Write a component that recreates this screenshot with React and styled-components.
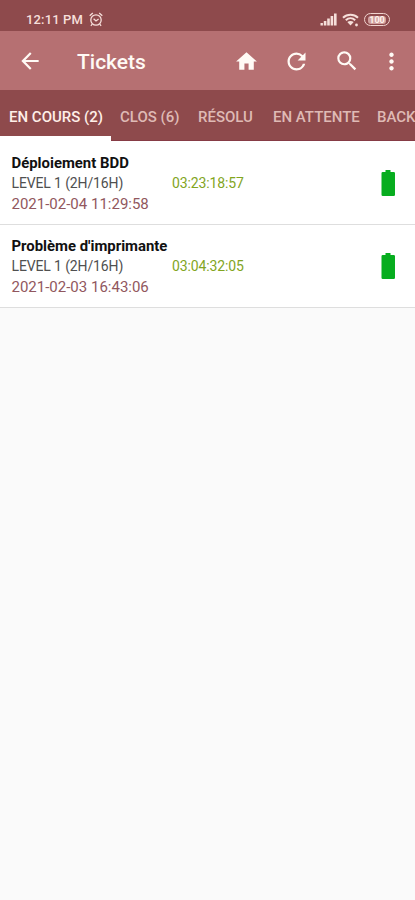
import React from "react";
import styled, { createGlobalStyle } from "styled-components";
import { MdArrowBack, MdHome, MdRefresh, MdSearch, MdMoreVert } from "react-icons/md";

const GlobalStyle = createGlobalStyle`
  * { box-sizing: border-box; }
  body { margin: 0; background: #fafafa; font-family: Roboto, sans-serif; }
`;

const Screen = styled.div`
  width: 415px;
  height: 900px;
  overflow: hidden;
  background: #fafafa;
`;

const StatusBar = styled.header`
  display: flex;
  align-items: center;
  justify-content: space-between;
  height: 31px;
  padding: 8px 25px 0 26px;
  background: #8e4a4c;
  color: #f6dfda;
`;

const StatusGroup = styled.div`
  display: flex;
  align-items: center;
  gap: ${(p) => p.$gap}px;
`;

const Clock = styled.span`
  font-size: 13px;
  line-height: 16px;
  font-weight: 500;
  letter-spacing: 0.15px;
`;

const Toolbar = styled.nav`
  display: flex;
  align-items: center;
  height: 59px;
  padding: 1px 4px 0 17px;
  background: #b67072;
  color: #fffaf5;
`;

const IconButton = styled.button`
  display: flex;
  align-items: center;
  justify-content: center;
  flex: none;
  width: ${(p) => p.$width}px;
  height: 40px;
  padding: 0;
  border: 0;
  background: none;
  color: inherit;
`;

const Title = styled.h1`
  flex: 1;
  margin: 2px 0 0 34px;
  font-size: 21px;
  line-height: 28px;
  font-weight: 500;
  letter-spacing: 0;
`;

const Tabs = styled.div`
  display: flex;
  width: 415px;
  height: 51px;
  overflow: hidden;
  background: linear-gradient(#8e4a4c 50px, #863b45 50px);
`;

const Tab = styled.div`
  flex: none;
  height: 51px;
  padding: 18px 0 0 9px;
  width: ${(p) => p.$width}px;
  border-bottom: ${(p) => (p.$active ? "5px solid #fff" : "0")};
  color: ${(p) => (p.$active ? "#ffefe8" : "#dfbab5")};
  font-size: 15px;
  line-height: 18px;
  font-weight: 500;
  white-space: nowrap;
`;

const TicketList = styled.main`
  padding-top: 1px;
  background: #fff;
`;

const Ticket = styled.article`
  display: flex;
  align-items: center;
  justify-content: space-between;
  height: 83px;
  padding: 1px 19px 0 11.500px;
  background: #fff;
  border-bottom: 1px solid #dedede;
`;

const Details = styled.div`
  display: grid;
  grid-template-columns: 160.500px auto;
  grid-template-rows: 20px 20px 21px;
  align-items: center;
  white-space: nowrap;
`;

const Subject = styled.h2`
  grid-column: 1 / -1;
  margin: 0;
  font-size: 14.900px;
  line-height: 20px;
  font-weight: 700;
  color: #111;
`;

const Level = styled.span`
  font-size: 14px;
  color: #505050;
  letter-spacing: -0.13px;
`;

const Timer = styled.span`
  font-size: 14px;
  color: #82a51e;
  letter-spacing: -0.13px;
`;

const Created = styled.time`
  font-size: 15px;
  color: #91575e;
`;

const BatterySlot = styled.div`
  display: flex;
  padding-bottom: 2px;
`;

const AlarmIcon = () => (
  <svg width="14" height="15" viewBox="0 0 14 15" fill="none" stroke="currentColor" strokeWidth="1.3">
    <circle cx="7" cy="8" r="5.2" />
    <path d="M.7 3.8 3.8 1M13.3 3.8 10.2 1M4.600 6.800 7 9l2.600-2M3.200 12.200l-1.300 1.600M10.800 12.200l1.300 1.600" />
  </svg>
);

const SignalIcon = () => (
  <svg width="17" height="13" viewBox="0 0 17 13" fill="currentColor">
    <path d="M.5 10h2.4v2.500H.5zM3.800 8h2.600v4.500H3.800zM7.200 5.500h2.600v7H7.200zM10.600 3h2.600v9.500h-2.600zM14 .5h2.600v12H14z" />
  </svg>
);

const WifiIcon = () => (
  <svg width="17" height="14" viewBox="0 0 17 14" fill="none" stroke="currentColor" strokeWidth="2">
    <path d="M1 4.700C5.200.7 11.800.7 16 4.700M3.800 7.200c2.800-2.600 6.600-2.600 9.400 0" />
    <path d="m5.300 9 3.200 3.400L11.700 9Q8.500 6.800 5.300 9Z" fill="currentColor" stroke="none" />
    <circle cx="14.500" cy="12" r="1.400" fill="currentColor" stroke="none" />
  </svg>
);

const ChargePill = styled.span`
  display: flex;
  align-items: center;
  justify-content: center;
  width: 26px;
  height: 13px;
  border: 1.5px solid #f0d3ce;
  border-radius: 7px;
`;

const ChargeLevel = styled.span`
  width: 18px;
  height: 8px;
  border-radius: 3px;
  background: #d0a09e;
  color: #fff3ec;
  font-size: 9px;
  line-height: 8px;
  font-weight: 700;
  text-align: center;
`;

const BatteryIcon = () => (
  <svg width="15" height="28" viewBox="0 0 15 28" fill="#07ad1f">
    <path d="M4.500 1h5v2h3.200q1.300 0 1.300 1.300v21.400q0 1.300-1.300 1.300H1.800Q.5 27 .5 25.700V4.300Q.5 3 1.800 3h2.700Z" />
  </svg>
);

const tabs = [
  { label: "EN COURS (2)", width: 111 },
  { label: "CLOS (6)", width: 78 },
  { label: "RÉSOLU", width: 75 },
  { label: "EN ATTENTE", width: 104 },
  { label: "BACK", width: 47 },
];

const tickets = [
  { subject: "Déploiement BDD", level: "LEVEL 1 (2H/16H)", timer: "03:23:18:57", created: "2021-02-04 11:29:58" },
  { subject: "Problème d'imprimante", level: "LEVEL 1 (2H/16H)", timer: "03:04:32:05", created: "2021-02-03 16:43:06" },
];

export default function App() {
  return (
    <Screen>
      <GlobalStyle />
      <StatusBar>
        <StatusGroup $gap={6}>
          <Clock>12:11 PM</Clock>
          <AlarmIcon />
        </StatusGroup>
        <StatusGroup $gap={5}>
          <SignalIcon />
          <WifiIcon />
          <ChargePill><ChargeLevel>100</ChargeLevel></ChargePill>
        </StatusGroup>
      </StatusBar>
      <Toolbar>
        <IconButton $width={26} aria-label="Retour"><MdArrowBack size={26} /></IconButton>
        <Title>Tickets</Title>
        <IconButton $width={50} aria-label="Accueil"><MdHome size={25} /></IconButton>
        <IconButton $width={51} aria-label="Actualiser"><MdRefresh size={27} /></IconButton>
        <IconButton $width={50} aria-label="Rechercher"><MdSearch size={26} /></IconButton>
        <IconButton $width={39} aria-label="Plus"><MdMoreVert size={27} /></IconButton>
      </Toolbar>
      <Tabs>
        {tabs.map((t, i) => (
          <Tab key={t.label} $active={i === 0} $width={t.width}>{t.label}</Tab>
        ))}
      </Tabs>
      <TicketList>
        {tickets.map((t) => (
          <Ticket key={t.subject}>
            <Details>
              <Subject>{t.subject}</Subject>
              <Level>{t.level}</Level>
              <Timer>{t.timer}</Timer>
              <Created>{t.created}</Created>
            </Details>
            <BatterySlot><BatteryIcon /></BatterySlot>
          </Ticket>
        ))}
      </TicketList>
    </Screen>
  );
}
